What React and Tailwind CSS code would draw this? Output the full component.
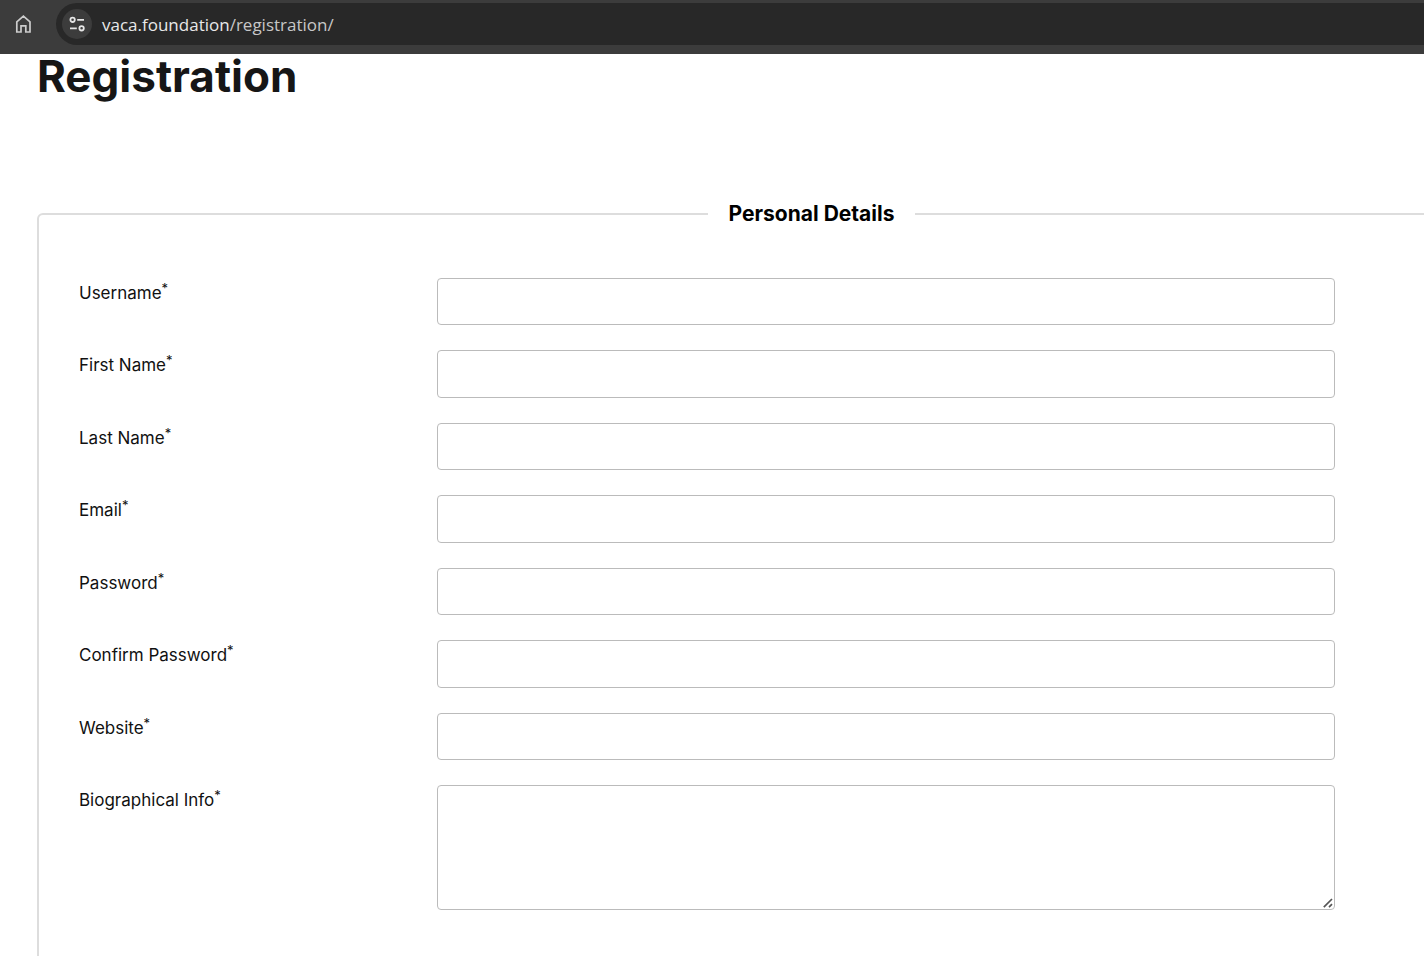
import React from "react";

const fields = [
  { id: "username", label: "Username", type: "text" },
  { id: "first-name", label: "First Name", type: "text" },
  { id: "last-name", label: "Last Name", type: "text" },
  { id: "email", label: "Email", type: "email" },
  { id: "password", label: "Password", type: "password" },
  { id: "confirm-password", label: "Confirm Password", type: "password" },
  { id: "website", label: "Website", type: "url" },
];

function HomeIcon() {
  return (
    <svg width="16" height="18" viewBox="0 0 16 18" fill="none" stroke="#cccccc" strokeWidth="1.7" aria-hidden="true">
      <path d="M1.8 6.9 8.4 1.2l6.6 5.7V17h-4.2v-6.2H6V17H1.8Z" />
    </svg>
  );
}

function SiteIcon() {
  return (
    <svg width="16" height="16" viewBox="0 0 16 16" fill="none" stroke="#e6e6e6" strokeWidth="1.8" aria-hidden="true">
      <circle cx="3.6" cy="3.8" r="2.2" />
      <path d="M8.2 3.8H15M1 12.3h6.8" />
      <circle cx="12.6" cy="12.3" r="2.2" />
    </svg>
  );
}

function ResizeGrip() {
  return (
    <svg
      width="10"
      height="10"
      viewBox="0 0 10 10"
      stroke="#555555"
      strokeWidth="1.7"
      className="pointer-events-none absolute right-[2px] bottom-[2px]"
      aria-hidden="true"
    >
      <path d="M0.8 9.2 9 1M6 9.2 9 6.2" />
    </svg>
  );
}

function BrowserBar() {
  return (
    <header className="flex h-[54px] items-start bg-[#3c3c3c] pt-[3px]">
      <button type="button" aria-label="Home" className="flex h-[42px] w-[56px] items-center pl-[15px]">
        <HomeIcon />
      </button>
      <div className="flex h-[42px] flex-1 items-center rounded-l-full bg-[#282828] pl-[6px]">
        <button
          type="button"
          aria-label="View site information"
          className="flex size-[30px] items-center justify-center rounded-full bg-[#3c3c3c]"
        >
          <SiteIcon />
        </button>
        <a
          href="#registration"
          className="pt-[2px] pl-[10px] font-['Open_Sans','Noto_Sans',sans-serif] text-[17px] leading-[24px] text-[#c7c7c7]"
        >
          <span className="text-[#e8e8e8]">vaca.foundation</span>/registration/
        </a>
      </div>
    </header>
  );
}

function FieldLabel({ id, children }) {
  return (
    <label htmlFor={id} className="w-[358px] shrink-0 pt-[2px] text-[17px] leading-[26px]">
      {children}
      <sup className="text-[13px]">*</sup>
    </label>
  );
}

export default function App() {
  return (
    <div className="min-h-screen overflow-hidden bg-white font-['Inter',sans-serif] text-[#111111]">
      <BrowserBar />
      <main id="registration" className="pl-[37px]">
        <h1 className="text-[44px] leading-[44px] font-bold text-[#161616]">Registration</h1>
        <form className="-mr-[162px] pt-[100px]">
          <fieldset className="rounded-[6px] border-2 border-[#dddddd] pb-[60px]">
            <legend className="mx-auto px-[21px] text-[21px] leading-[32px] font-bold text-black">
              Personal Details
            </legend>
            <div className="flex flex-col gap-[25px] pt-[48px] pr-[249px] pl-[40px]">
              {fields.map((field) => (
                <div key={field.id} className="flex odd:h-[47px] even:h-[48px]">
                  <FieldLabel id={field.id}>{field.label}</FieldLabel>
                  <input
                    id={field.id}
                    type={field.type}
                    required
                    className="h-full min-w-0 flex-1 rounded-[4px] border border-[#bbbbbb] bg-white px-3"
                  />
                </div>
              ))}
              <div className="flex">
                <FieldLabel id="biographical-info">Biographical Info</FieldLabel>
                <div className="relative min-w-0 flex-1">
                  <textarea
                    id="biographical-info"
                    required
                    className="block h-[125px] w-full resize-y rounded-[4px] border border-[#bbbbbb] bg-white p-3 [&::-webkit-resizer]:bg-transparent"
                  />
                  <ResizeGrip />
                </div>
              </div>
            </div>
          </fieldset>
        </form>
      </main>
    </div>
  );
}
